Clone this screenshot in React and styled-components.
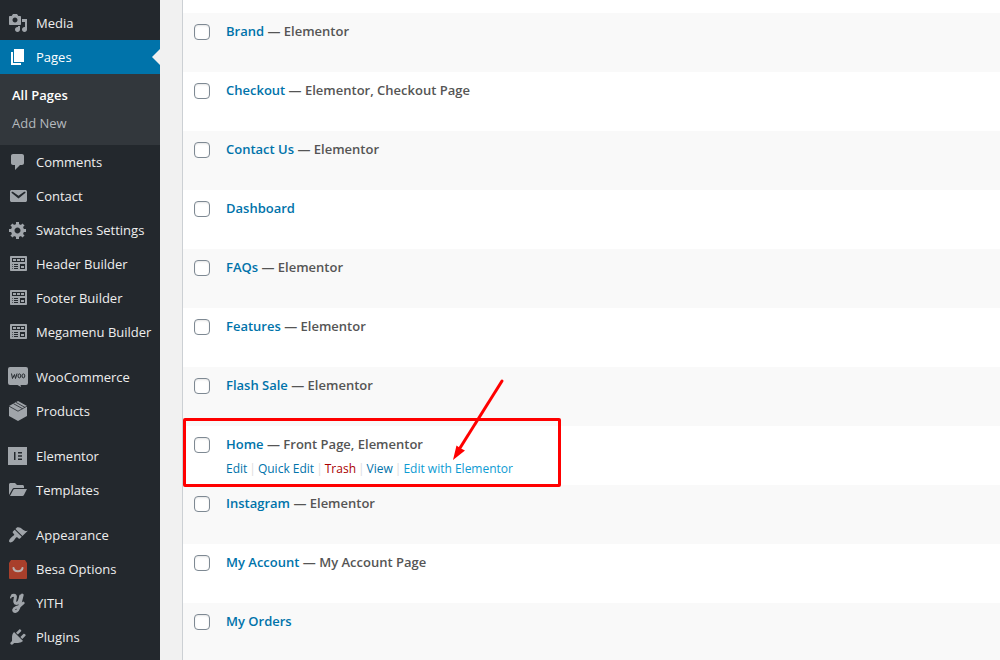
import React from "react";
import styled, { createGlobalStyle, css } from "styled-components";

const GlobalStyle = createGlobalStyle`
  *, *::before, *::after { box-sizing: border-box; }
  body {
    margin: 0;
    background: #f1f1f1;
    font-family: "Segoe UI", "Open Sans", "Noto Sans", sans-serif;
    font-size: 13px;
    color: #555;
  }
  a { text-decoration: none; }
  ul { list-style: none; margin: 0; padding: 0; }
`;

const Shell = styled.div`
  display: flex;
  height: 100vh;
  overflow: hidden;
`;

const Sidebar = styled.nav`
  flex: 0 0 160px;
  padding-top: 6px;
  background: #23282d;
`;

const MenuItem = styled.li`
  margin-top: ${({ $spaced }) => ($spaced ? "11px" : "0")};
`;

const MenuLink = styled.a`
  position: relative;
  display: flex;
  align-items: center;
  gap: 8px;
  height: 34px;
  padding-left: 8px;
  font-size: 13px;
  line-height: 18px;
  white-space: nowrap;
  color: #eee;

  svg {
    flex: none;
    width: 20px;
    height: 20px;
    fill: #a0a5aa;
  }

  ${({ $current }) =>
    $current &&
    css`
      background: #0073aa;
      color: #fff;

      svg { fill: #fff; }

      &::after {
        content: "";
        position: absolute;
        top: 9px;
        right: 0;
        border: 8px solid transparent;
        border-left: 0;
        border-right-color: #f1f1f1;
      }
    `}
`;

const SubMenu = styled.ul`
  padding: 7px 0 8px;
  background: #32373c;
`;

const SubLink = styled.a`
  display: block;
  padding: 0 12px;
  font-size: 13px;
  line-height: 28px;
  font-weight: ${({ $current }) => ($current ? 600 : 400)};
  color: ${({ $current }) => ($current ? "#fff" : "#b4b9be")};
`;

const Content = styled.main`
  flex: 1;
  min-width: 0;
  padding-left: 22px;
`;

const ListPanel = styled.div`
  min-height: 100%;
  padding-top: 13px;
  border-left: 1px solid #ccd0d4;
  background: #fff;
`;

const PageTable = styled.table`
  width: 100%;
  border-collapse: collapse;
`;

const Row = styled.tr`
  height: 59px;
  vertical-align: top;

  &:nth-child(odd) { background: #f9f9f9; }
`;

const CheckCell = styled.th`
  position: relative;
  width: 43px;
  padding: 11px 0 0 11px;
  text-align: left;
`;

const Checkbox = styled.input`
  display: block;
  appearance: none;
  width: 16px;
  height: 16px;
  margin: 0;
  border: 1px solid #7e8993;
  border-radius: 4px;
  background: #fff;
  box-shadow: inset 0 1px 2px rgba(0, 0, 0, 0.1);
`;

const TitleCell = styled.td`
  padding: 8px 10px 0 0;
`;

const Title = styled.strong`
  display: block;
  font-size: 13px;
  line-height: 20px;
  font-weight: 600;
  color: #555;

  a { color: #0073aa; }
`;

const Actions = styled.div`
  display: flex;
  gap: 2px;
  padding-top: 5px;
  font-size: 12px;
  line-height: 20px;
  color: #ddd;
`;

const ActionLink = styled.a`
  color: ${({ $tone }) =>
    ({ danger: "#a00", bright: "#0d9bd3" })[$tone] || "#0073aa"};
`;

const Highlight = styled.div`
  position: absolute;
  z-index: 1;
  top: -8px;
  left: 0;
  width: 378px;
  height: 69px;
  border: 3px solid #ff0000;
  border-radius: 2px;
  pointer-events: none;
`;

const Arrow = styled.svg`
  position: absolute;
  z-index: 2;
  top: -48px;
  left: 268px;
  width: 54px;
  height: 84px;
  pointer-events: none;
`;

const Glyph = ({ d, children }) => (
  <svg viewBox="0 0 20 20" aria-hidden="true">
    {d && <path fillRule="evenodd" d={d} />}
    {children}
  </svg>
);

const widgets =
  "M19 16V3c0-.55-.45-1-1-1H3c-.55 0-1 .45-1 1v13c0 .55.45 1 1 1h15c.55 0 1-.45 1-1zM4 4h13v4H4V4zm1 1v2h3V5H5zm4 0v2h3V5H9zm4 0v2h3V5h-3zm-8.5 5c.28 0 .5.22.5.5s-.22.5-.5.5-.5-.22-.5-.5.22-.5.5-.5zM6 10h4v1H6v-1zm6 0h5v5h-5v-5zm-7.5 2c.28 0 .5.22.5.5s-.22.5-.5.5-.5-.22-.5-.5.22-.5.5-.5zM6 12h4v1H6v-1zm7 0v2h3v-2h-3zm-8.5 2c.28 0 .5.22.5.5s-.22.5-.5.5-.5-.22-.5-.5.22-.5.5-.5zM6 14h4v1H6v-1z";

const icons = {
  media: (
    <Glyph d="M13 11V4c0-.55-.45-1-1-1h-1.67L9 1H5L3.67 3H2c-.55 0-1 .45-1 1v7c0 .55.45 1 1 1h10c.55 0 1-.45 1-1zM7 4.5c1.38 0 2.5 1.12 2.5 2.5S8.38 9.5 7 9.5 4.5 8.38 4.5 7 5.62 4.5 7 4.5zM14 6h5v10.5c0 1.38-1.12 2.5-2.5 2.5S14 17.88 14 16.5s1.12-2.5 2.5-2.5c.17 0 .34.02.5.05V9h-3V6zm-4 8.05V13h2v3.5c0 1.38-1.12 2.5-2.5 2.5S7 17.88 7 16.5 8.12 14 9.5 14c.17 0 .34.02.5.05z" />
  ),
  pages: <Glyph d="M6 15V2h10v13H6zm-1 1h8v2H3V5h2v11z" />,
  comments: (
    <Glyph d="M5 2h9c1.1 0 2 .9 2 2v7c0 1.1-.9 2-2 2h-2l-5 5v-5H5c-1.1 0-2-.9-2-2V4c0-1.1.9-2 2-2z" />
  ),
  email: (
    <Glyph d="M3.87 4h13.25C18.37 4 19 4.59 19 5.79v8.42c0 1.19-.63 1.79-1.88 1.79H3.87c-1.25 0-1.88-.6-1.88-1.79V5.79c0-1.2.63-1.79 1.88-1.79zm6.62 8.6l6.74-5.53c.24-.2.43-.66.13-1.07-.29-.41-.82-.42-1.17-.17l-5.7 3.86L4.8 5.83c-.35-.25-.88-.24-1.17.17-.3.41-.11.87.13 1.07z" />
  ),
  gear: (
    <Glyph d="M18 12h-2.18c-.17.7-.44 1.35-.81 1.93l1.54 1.54-2.1 2.1-1.54-1.54c-.58.36-1.23.63-1.91.79V19H8v-2.18c-.68-.16-1.33-.43-1.91-.79l-1.54 1.54-2.12-2.12 1.54-1.54c-.36-.58-.63-1.23-.79-1.91H1V9.03h2.17c.16-.7.44-1.35.8-1.94L2.43 5.55l2.1-2.1 1.54 1.54c.58-.37 1.24-.64 1.93-.81V2h3v2.18c.68.16 1.33.43 1.91.79l1.54-1.54 2.12 2.12-1.54 1.54c.36.59.64 1.24.8 1.94H18V12zm-8.5 1.5c1.66 0 3-1.34 3-3s-1.34-3-3-3-3 1.34-3 3 1.34 3 3 3z" />
  ),
  widgets: <Glyph d={widgets} />,
  woo: (
    <Glyph d="M2 0h16a2 2 0 0 1 2 2v14a2 2 0 0 1-2 2h-5.5l.5 2-3.5-2H2a2 2 0 0 1-2-2V2a2 2 0 0 1 2-2z">
      <g fill="none" stroke="#23282d" strokeWidth="1">
        <path d="M3.5 6.5l1 5 2-4 1 4 1.5-5" />
        <ellipse cx="11.4" cy="8.9" rx="1.4" ry="2" />
        <ellipse cx="15.4" cy="8.9" rx="1.4" ry="2" />
      </g>
    </Glyph>
  ),
  products: (
    <Glyph d="M10 0l9 5v10l-9 5-9-5V5z">
      <path
        d="M1 5.2l9 5 9-5M5.5 2.7l9 5M8 1.4l9 5"
        fill="none"
        stroke="#23282d"
        strokeWidth=".8"
      />
    </Glyph>
  ),
  elementor: (
    <Glyph d="M0 1h19v18H0zM6 6v8h1.5V6zm4 0v1.5h4V6zm0 3.25v1.5h4v-1.5zm0 3.25V14h4v-1.5z" />
  ),
  folder: (
    <Glyph d="M1 15V4.5C1 3.7 1.7 3 2.5 3H7l2 2h5.5c.8 0 1.5.6 1.5 1.5V8H6.500c-1 0-1.8.5-2.2 1.3zM2 16l3.3-6.2c.3-.5.8-.8 1.4-.8H19l-3.2 6.2c-.3.5-.8.8-1.4.8z" />
  ),
  brush: (
    <Glyph d="M14.48 11.06L7.41 3.99l1.5-1.5c.5-.56 2.3-.47 3.51.32 1.21.8 1.43 1.28 2.91 2.1 1.18.64 2.45 1.26 4.45.85zm-.71.71L6.7 4.7 4.93 6.47c-.39.39-.39 1.02 0 1.41l1.06 1.06c.39.39.39 1.03 0 1.42-.6.6-1.43 1.11-2.21 1.69-.35.26-.7.53-1.01.84C1.43 14.23.4 16.08 1.4 17.07c.99 1 2.84-.03 4.18-1.36.31-.31.58-.66.85-1.02.57-.78 1.08-1.61 1.69-2.21.39-.39 1.02-.39 1.41 0l1.06 1.06c.39.39 1.02.39 1.41 0z" />
  ),
  besa: (
    <Glyph>
      <path fill="#a83f2b" d="M3 1h14l2 3v15a1 1 0 0 1-1 1H2a1 1 0 0 1-1-1V4z" />
      <path
        d="M5.5 9c.6 4.3 8.4 4.3 9 0"
        fill="none"
        stroke="#b9b0ae"
        strokeWidth="2"
        strokeLinecap="round"
      />
    </Glyph>
  ),
  yith: (
    <Glyph>
      <g fill="none" stroke="#a0a5aa" strokeLinecap="round" strokeLinejoin="round">
        <path strokeWidth="3" d="M4.5 2.5c3-.8 3.300.7 2.700 3C6.500 8.500 6.500 10.500 8.300 10.500c2 0 3.600-3 4.400-7.500" />
        <path strokeWidth="2.800" d="M14.300 2l-2.400 9.500c-1 4.300-2.300 7-4.500 7-2.800 0-2.300-3.200 1-4.200 2.800-.8 5-1.800 6.900-4.300" />
        <path strokeWidth="1.600" d="M2.800 4.600c.2-1 .7-1.700 1.500-2" />
      </g>
    </Glyph>
  ),
  plug: (
    <Glyph d="M13.11 4.36L9.87 7.6 8 5.73l3.24-3.24c.35-.34 1.05-.2 1.56.32.52.51.66 1.21.31 1.55zm-8 1.77l.91-1.12 9.01 9.01-1.19.84c-.71.71-2.63 1.16-3.82 1.16H6.14L4.9 17.26c-.59.59-1.54.59-2.12 0-.59-.58-.59-1.53 0-2.12l1.24-1.24v-3.88c0-1.13.4-3.19 1.09-3.89zm7.26 3.97l3.24-3.24c.34-.35 1.04-.21 1.55.31.52.51.66 1.21.31 1.55l-3.24 3.25z" />
  ),
};

const menu = [
  { label: "Media", icon: "media" },
  { label: "Pages", icon: "pages", current: true, children: ["All Pages", "Add New"] },
  { label: "Comments", icon: "comments" },
  { label: "Contact", icon: "email" },
  { label: "Swatches Settings", icon: "gear" },
  { label: "Header Builder", icon: "widgets" },
  { label: "Footer Builder", icon: "widgets" },
  { label: "Megamenu Builder", icon: "widgets" },
  { label: "WooCommerce", icon: "woo", spaced: true },
  { label: "Products", icon: "products" },
  { label: "Elementor", icon: "elementor", spaced: true },
  { label: "Templates", icon: "folder" },
  { label: "Appearance", icon: "brush", spaced: true },
  { label: "Besa Options", icon: "besa" },
  { label: "YITH", icon: "yith" },
  { label: "Plugins", icon: "plug" },
];

const pages = [
  { title: "Brand", state: "Elementor" },
  { title: "Checkout", state: "Elementor, Checkout Page" },
  { title: "Contact Us", state: "Elementor" },
  { title: "Dashboard" },
  { title: "FAQs", state: "Elementor" },
  { title: "Features", state: "Elementor" },
  { title: "Flash Sale", state: "Elementor" },
  { title: "Home", state: "Front Page, Elementor", active: true },
  { title: "Instagram", state: "Elementor" },
  { title: "My Account", state: "My Account Page" },
  { title: "My Orders" },
];

const actions = [
  { label: "Edit" },
  { label: "Quick Edit" },
  { label: "Trash", tone: "danger" },
  { label: "View" },
  { label: "Edit with Elementor", tone: "bright" },
];

function RowActions() {
  return (
    <Actions>
      {actions.map(({ label, tone }, i) => (
        <React.Fragment key={label}>
          {i > 0 && <span>|</span>}
          <ActionLink href="#" $tone={tone}>{label}</ActionLink>
        </React.Fragment>
      ))}
    </Actions>
  );
}

function PageRow({ title, state, active }) {
  return (
    <Row>
      <CheckCell scope="row">
        <Checkbox type="checkbox" aria-label={`Select ${title}`} />
        {active && (
          <>
            <Highlight />
            <Arrow viewBox="0 0 54 84" aria-hidden="true">
              <path d="M51 3L9 70" stroke="#ff0000" strokeWidth="3" strokeLinecap="round" />
              <path d="M2 82L5.5 67.5l3.500 2.500 5 2.500z" fill="#ff0000" />
            </Arrow>
          </>
        )}
      </CheckCell>
      <TitleCell>
        <Title>
          <a href="#">{title}</a>
          {state && ` — ${state}`}
        </Title>
        {active && <RowActions />}
      </TitleCell>
    </Row>
  );
}

export default function App() {
  return (
    <>
      <GlobalStyle />
      <Shell>
        <Sidebar aria-label="Main menu">
          <ul>
            {menu.map(({ label, icon, current, spaced, children }) => (
              <MenuItem key={label} $spaced={spaced}>
                <MenuLink href="#" $current={current}>
                  {icons[icon]}
                  {label}
                </MenuLink>
                {children && (
                  <SubMenu>
                    {children.map((child, i) => (
                      <li key={child}>
                        <SubLink href="#" $current={i === 0}>{child}</SubLink>
                      </li>
                    ))}
                  </SubMenu>
                )}
              </MenuItem>
            ))}
          </ul>
        </Sidebar>
        <Content>
          <ListPanel>
            <PageTable>
              <tbody>
                {pages.map((page) => (
                  <PageRow key={page.title} {...page} />
                ))}
              </tbody>
            </PageTable>
          </ListPanel>
        </Content>
      </Shell>
    </>
  );
}
